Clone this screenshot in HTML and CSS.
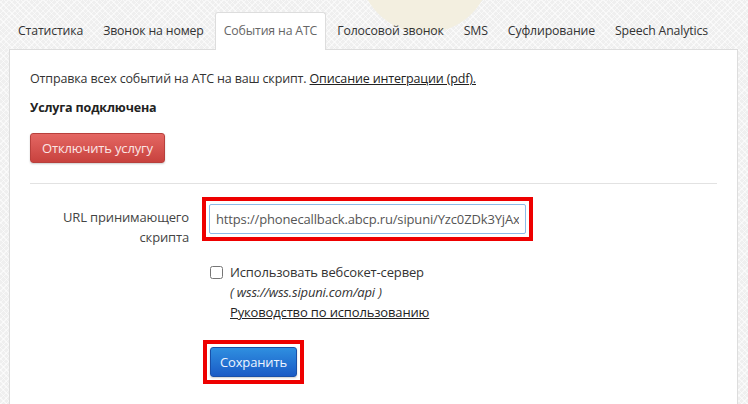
FILE: index.html
```html
<!DOCTYPE html>
<html lang="ru">
<head>
    <meta charset="UTF-8">
    <title>События на АТС</title>
    <link rel="stylesheet" href="styles.css">
</head>
<body>
    <div class="sun"></div>
    <div class="page">
        <ul class="tabs">
            <li class="tab">Статистика</li>
            <li class="tab">Звонок на номер</li>
            <li class="tab active">События на АТС</li>
            <li class="tab">Голосовой звонок</li>
            <li class="tab">SMS</li>
            <li class="tab">Суфлирование</li>
            <li class="tab">Speech Analytics</li>
        </ul>
        <div class="panel">
            <p class="intro">Отправка всех событий на АТС на ваш скрипт. <a href="#">Описание интеграции (pdf).</a></p>
            <p class="status">Услуга подключена</p>
            <button class="btn btn-red">Отключить услугу</button>
            <hr class="divider">
            <div class="form-row">
                <label class="form-label">URL принимающего скрипта</label>
                <div class="highlight">
                    <input type="text" class="url-input" value="https://phonecallback.abcp.ru/sipuni/Yzc0ZDk3YjAxZmQ2">
                </div>
            </div>
            <div class="options">
                <label class="check">
                    <input type="checkbox">
                    <span>Использовать вебсокет-сервер</span>
                </label>
                <div class="hint">( wss://wss.sipuni.com/api )</div>
                <div class="guide"><a href="#">Руководство по использованию</a></div>
                <div class="highlight save-box">
                    <button class="btn btn-blue">Сохранить</button>
                </div>
            </div>
        </div>
    </div>
</body>
</html>
```

FILE: styles.css
```css
body {
    margin: 0;
    height: 404px;
    overflow: hidden;
    font-family: "Open Sans", "Noto Sans", sans-serif;
    font-size: 12.5px;
    letter-spacing: -0.15px;
    color: #333;
    background-color: #efefef;
    background-image:
        repeating-linear-gradient(45deg, rgba(255, 255, 255, 0.55) 0 1px, transparent 1px 4px),
        repeating-linear-gradient(-45deg, rgba(255, 255, 255, 0.55) 0 1px, transparent 1px 4px);
    position: relative;
}
.sun {
    position: absolute;
    left: 359px;
    top: -99px;
    width: 132px;
    height: 132px;
    border-radius: 50%;
    background: #f3efe0;
}
.page {
    position: relative;
    padding: 12px 10px 0 9px;
}
.tabs {
    list-style: none;
    margin: 0;
    padding: 0;
    display: flex;
    height: 37px;
}
.tab {
    padding: 0 8px;
    margin-right: 2px;
    line-height: 36px;
    font-size: 12.3px;
    white-space: nowrap;
    color: #333;
    border: 1px solid transparent;
    border-bottom: none;
    border-radius: 3px 3px 0 0;
}
.tab.active {
    background: #fff;
    border-color: #ddd;
    color: #666;
    margin-bottom: -1px;
    position: relative;
}
.panel {
    background: #fff;
    border: 1px solid #ddd;
    padding: 20px 20px 30px;
}
.intro {
    margin: 0;
    line-height: 18px;
}
.intro a, .guide a {
    color: #222;
    text-decoration: underline;
}
.status {
    margin: 11px 0 0;
    font-weight: bold;
    line-height: 18px;
    color: #222;
}
.btn {
    font-family: inherit;
    font-size: 13px;
    letter-spacing: -0.15px;
    color: #fff;
    border-radius: 3px;
    cursor: pointer;
    height: 30px;
    padding: 0 10px;
}
.btn-red {
    margin-top: 16px;
    background: linear-gradient(#e46763, #c8423e);
    border: 1px solid #b8403c;
    box-shadow: 0 1px 2px rgba(0, 0, 0, 0.2);
    color: #fbe6e5;
    padding: 0 11px;
}
.btn-blue {
    background: linear-gradient(#2f8fe0, #1a5bc6);
    border: 1px solid #1a50a8;
    box-shadow: 0 1px 2px rgba(0, 0, 0, 0.2);
    color: #eef4ff;
    padding: 0 9px;
    font-size: 13px;
}
.divider {
    border: 0;
    border-top: 1px solid #e2e2e2;
    margin: 20px 0 0;
}
.form-row {
    display: flex;
    align-items: flex-start;
    margin-top: 13px;
}
.form-label {
    width: 159px;
    text-align: right;
    line-height: 20px;
    font-size: 13px;
    color: #444;
    padding-top: 10px;
    margin-right: 13px;
}
.highlight {
    border: 4px solid #ee0000;
    padding: 3px;
}
.url-input {
    display: block;
    box-sizing: border-box;
    width: 317px;
    height: 30px;
    border: 1px solid #8cbbe8;
    border-radius: 2px;
    padding: 0 6px;
    font-family: inherit;
    font-size: 13px;
    letter-spacing: -0.15px;
    color: #555;
    outline: none;
}
.options {
    padding-left: 180px;
    margin-top: 15px;
}
.check {
    display: flex;
    align-items: center;
    line-height: 20px;
    font-size: 13px;
}
.check input {
    width: 13px;
    height: 13px;
    margin: 0 7px 0 0;
}
.hint {
    font-style: italic;
    line-height: 20px;
    padding-left: 20px;
    font-size: 13px;
}
.guide {
    line-height: 20px;
    padding-left: 20px;
    font-size: 13px;
}
.save-box {
    display: inline-block;
    margin-top: 18px;
    margin-left: -7px;
}
.save-box .btn {
    display: block;
}
```
